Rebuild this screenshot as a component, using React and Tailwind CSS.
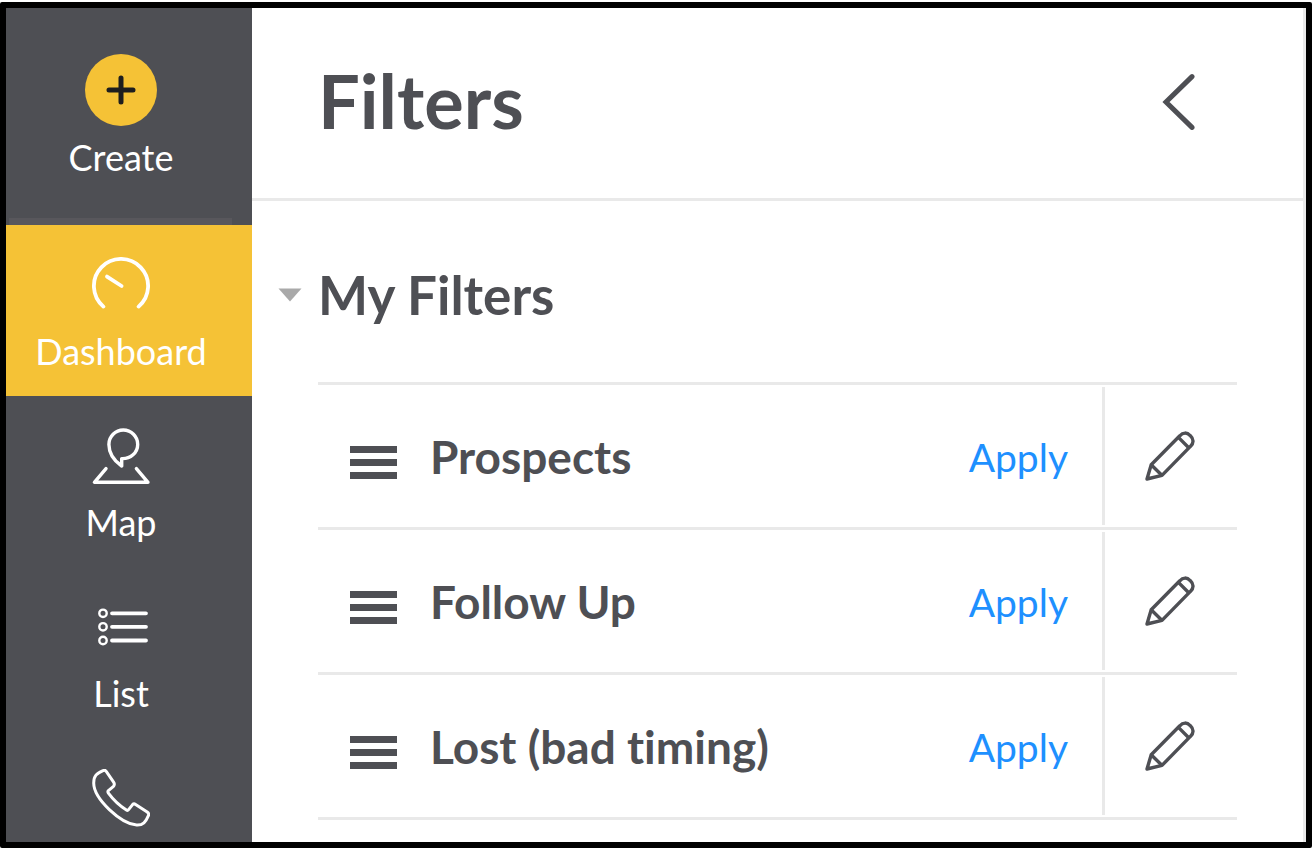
import React from 'react';

const DashboardIcon = () => (
  <svg viewBox="0 0 58 58" className="size-[58px]" fill="none" stroke="currentColor" strokeWidth="3.8" strokeLinecap="round" aria-hidden="true">
    <path d="M11.4 49.6A27.1 27.1 0 1 1 46.6 49.6" />
    <path d="M15 19.6L29.6 29" />
  </svg>
);

const MapIcon = () => (
  <svg viewBox="0 0 58 58" className="size-[58px]" fill="none" stroke="currentColor" strokeWidth="3.4" strokeLinecap="round" strokeLinejoin="round" aria-hidden="true">
    <path d="M29.7 38V30.6C38.5 31 45.7 24.6 45.7 16.4A14.4 14.4 0 0 0 16.9 16.4C16.9 25.5 22 32.6 29.7 38Z" />
    <path d="M14 40.6L2.4 54.3H56L44.4 40.6" />
  </svg>
);

const ListIcon = () => (
  <svg viewBox="0 0 58 58" className="size-[58px]" fill="none" stroke="currentColor" strokeLinecap="round" aria-hidden="true">
    <g strokeWidth="2.4">
      <circle cx="11" cy="14.3" r="3.7" />
      <circle cx="11" cy="27.8" r="3.7" />
      <circle cx="11" cy="41.5" r="3.7" />
    </g>
    <path d="M20 14.3H54M20 27.8H54M20 41.5H54" strokeWidth="3.8" />
  </svg>
);

const PhoneIcon = () => (
  <svg viewBox="0 0 58 58" className="size-[58px]" fill="none" stroke="currentColor" strokeWidth="3" strokeLinejoin="round" aria-hidden="true">
    <path d="M11 1.6Q13 0.6 14.4 2.6L21.6 13.2Q23.2 15.6 21.2 17.6L16.4 21.6Q15.4 22.6 16.4 24.2C21.4 31 27.6 36.8 34.4 41Q35.6 41.8 36.6 40.6L40.6 35.6Q41.8 34.2 43.6 35.4L55.2 43Q57.4 44.6 56.4 46.6C53.8 52.8 51 56.4 44.6 56C29 54.8 1.8 30 1.7 14C1.7 6.6 4.6 4.6 11 1.6Z" />
  </svg>
);

const PencilIcon = () => (
  <svg viewBox="0 0 50 50" className="size-[50px]" fill="none" stroke="currentColor" strokeWidth="3.4" strokeLinejoin="round" aria-hidden="true">
    <path d="M2 48L6.2 33.8L34.8 4.8C38 1.2 42 1.2 45.2 4.6C48.8 8 49 12 45.4 15.4L17 44.4Z" />
    <path d="M33.4 6.4L44 17M6.4 34L16.6 44" />
  </svg>
);

const navItems = [
  { label: 'Dashboard', icon: DashboardIcon, active: true },
  { label: 'Map', icon: MapIcon },
  { label: 'List', icon: ListIcon },
];

const filters = ['Prospects', 'Follow Up', 'Lost (bad timing)'];

const Sidebar = () => (
  <nav className="flex w-[246px] shrink-0 flex-col bg-[#4e4f54] text-4xl/[44px] text-white">
    <button type="button" className="flex flex-col items-center pt-[46px] pr-4">
      <span className="flex size-[72px] items-center justify-center rounded-full bg-[#f5c236] text-[#1e1e1e]">
        <svg viewBox="0 0 30 30" className="size-[30px]" stroke="currentColor" strokeWidth="5" strokeLinecap="round" aria-hidden="true">
          <path d="M15 3V27M3 15H27" />
        </svg>
      </span>
      <span className="mt-[9px]">Create</span>
    </button>
    <div className="mt-[39px] mr-5 ml-[3px] h-[7px] shrink-0 bg-[#58575c]" />
    {navItems.map(({ label, icon: Icon, active }) => (
      <a
        key={label}
        href="#"
        aria-current={active ? 'page' : undefined}
        className={`flex h-[171px] shrink-0 flex-col items-center pt-8 pr-4 ${active ? 'bg-[#f5c236]' : ''}`}
      >
        <Icon />
        <span className="mt-3.5">{label}</span>
      </a>
    ))}
    <a href="#" aria-label="Calls" className="flex shrink-0 flex-col items-center pt-[31px] pr-4">
      <PhoneIcon />
    </a>
  </nav>
);

const FilterRow = ({ name }) => (
  <li className="flex h-[145px] border-b-[3px] border-[#e9e9e9]">
    <div className="flex flex-1 items-center pl-8">
      <span className="mt-3 flex w-[47px] flex-col gap-1.5" aria-hidden="true">
        <span className="h-[7px] bg-[#4e4f54]" />
        <span className="h-[7px] bg-[#4e4f54]" />
        <span className="h-[7px] bg-[#4e4f54]" />
      </span>
      <span className="ml-[33px] flex-1 pt-0.5 text-[46px]/[56px] font-bold">{name}</span>
      <button type="button" className="mr-[34px] pt-0.5 text-[39px]/[56px] text-[#1e90ff]">
        Apply
      </button>
    </div>
    <div className="my-0.5 flex w-[135px] items-center border-l-[3px] border-[#e9e9e9] pl-10">
      <button type="button" aria-label={`Edit ${name}`}>
        <PencilIcon />
      </button>
    </div>
  </li>
);

const App = () => {
  return (
    <div className="h-screen bg-white py-0.5 pr-0.5 font-['Lato',sans-serif] text-[#4e4f54] [font-variant-ligatures:none]">
      <div className="flex h-full overflow-hidden rounded-xs border-6 border-black">
        <Sidebar />
        <main className="min-w-0 flex-1 border-r-[3px] border-[#e9e9e9]">
          <header className="flex h-[193px] items-center justify-between border-b-[3px] border-[#e9e9e9] pr-[108px] pb-1 pl-[66px]">
            <h1 className="text-[74px]/[88px] font-bold">Filters</h1>
            <button type="button" aria-label="Collapse filters">
              <svg viewBox="0 0 34 58" className="h-[58px] w-[34px]" fill="none" stroke="currentColor" strokeWidth="5" strokeLinecap="round" strokeLinejoin="miter" aria-hidden="true">
                <path d="M31 4.6L5 30L31 55.4" />
              </svg>
            </button>
          </header>
          <section className="px-[66px] pt-[63px]">
            <button type="button" aria-expanded="true" className="-ml-10 flex items-center gap-4">
              <svg viewBox="0 0 24 14" className="h-3.5 w-6" fill="#a9a9a9" aria-hidden="true">
                <path d="M0.5 0.5H23.5L12 13.5Z" />
              </svg>
              <h2 className="text-[53px]/[62px] font-bold">My Filters</h2>
            </button>
            <ul className="mt-14 border-t-[3px] border-[#e9e9e9]">
              {filters.map((name) => (
                <FilterRow key={name} name={name} />
              ))}
            </ul>
          </section>
        </main>
      </div>
    </div>
  );
};

export default App;
